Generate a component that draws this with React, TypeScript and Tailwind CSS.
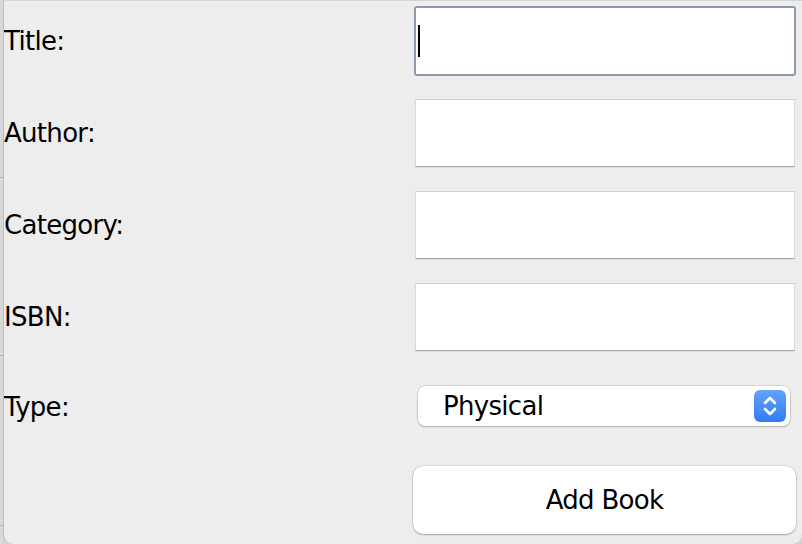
import React from "react";

function Field({ focused = false }: { focused?: boolean }) {
  if (focused) {
    return (
      <div className="-ml-px flex h-[70px] w-[382px] items-center rounded-[3px] border-2 border-[#8b99aa] bg-white pl-[2px]">
        <div className="h-[32px] w-[2px] bg-black" />
      </div>
    );
  }
  return (
    <div className="h-[68px] w-[380px] border border-[#d9d9d9] border-b-[#a9a9a9] border-t-[#cfcfcf] bg-white shadow-[0_1px_0_rgba(0,0,0,0.06)]" />
  );
}

function Row({ label, children, top = 7, h = 68 }: { label: string; children: React.ReactNode; top?: number; h?: number }) {
  return (
    <div className="flex h-[92px] shrink-0">
      <div className="w-[411px]" style={{ paddingTop: top }}>
        <div className="flex items-center" style={{ height: h }}>
          {label}
        </div>
      </div>
      <div style={{ paddingTop: top }}>{children}</div>
    </div>
  );
}

export default function App() {
  return (
    <div className="relative flex h-[544px] w-[802px] overflow-hidden bg-[#d2d2d2] font-['DejaVu_Sans',sans-serif] text-[26px] tracking-[-0.7px] text-black">
      <div className="relative w-[3px] shrink-0 bg-[#d8d8d8]">
        <div className="absolute left-0 top-[177px] h-px w-[3px] bg-[#b0b0b0]" />
        <div className="absolute left-0 top-[355px] h-px w-[3px] bg-[#b0b0b0]" />
        <div className="absolute left-0 top-[525px] h-px w-[3px] bg-[#b0b0b0]" />
      </div>
      <div className="flex h-[544px] flex-1 flex-col overflow-hidden rounded-b-[10px] border-l border-t border-[#bdbdbd] border-t-[#d6d6d6] bg-[#ededed]">
        <div className="-mt-px flex flex-col">
          <div className="flex h-[92px] shrink-0">
            <div className="w-[411px] pt-[7px]">
              <div className="flex h-[68px] items-center">Title:</div>
            </div>
            <div className="pt-[6px]">
              <Field focused />
            </div>
          </div>
          <Row label="Author:">
            <Field />
          </Row>
          <Row label="Category:">
            <Field />
          </Row>
          <Row label="ISBN:">
            <Field />
          </Row>
          <Row label="Type:" top={18} h={42}>
            <div className="ml-[3px] flex h-[40px] w-[372px] items-center justify-between rounded-[7px] bg-white pl-[25px] pr-[4px] shadow-[0_0_0_0.5px_rgba(0,0,0,0.18),0_1px_2px_rgba(0,0,0,0.22)]">
              <span>Physical</span>
              <div className="flex h-[32px] w-[32px] items-center justify-center rounded-[6px] bg-gradient-to-b from-[#64a2fa] to-[#2f7bf5]">
                <svg width="16" height="24" viewBox="0 0 16 24" fill="none" stroke="white" strokeWidth="2.6" strokeLinecap="round" strokeLinejoin="round">
                  <path d="M3 9 L8 4 L13 9" />
                  <path d="M3 15 L8 20 L13 15" />
                </svg>
              </div>
            </div>
          </Row>
          <div className="flex h-[92px] shrink-0">
            <div className="w-[411px]" />
            <div className="pt-[6px]">
              <div className="-ml-[2px] flex h-[68px] w-[383px] items-center justify-center rounded-[10px] bg-white shadow-[0_0_0_0.5px_rgba(0,0,0,0.15),0_1px_2px_rgba(0,0,0,0.25)]">
                Add Book
              </div>
            </div>
          </div>
        </div>
      </div>
    </div>
  );
}
